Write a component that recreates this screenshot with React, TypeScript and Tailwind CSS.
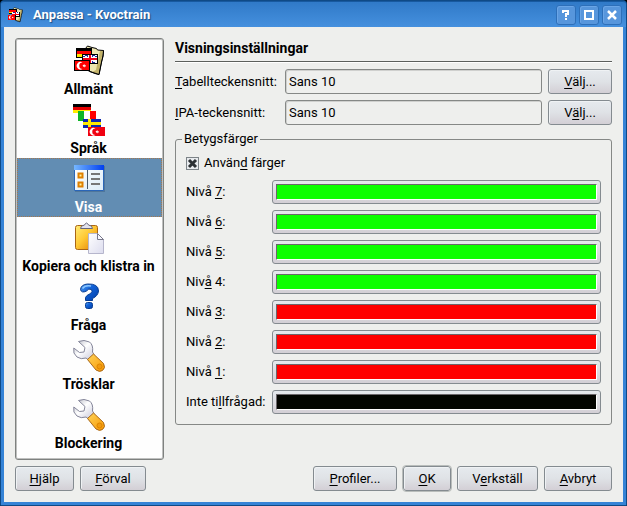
import React, { useState } from "react";

const button =
  "h-[25px] rounded-[3px] border border-[#848b90] bg-linear-to-b from-[#e6eaee] via-[#dfe2e6] to-[#d3cfd5] text-[13px] leading-4 text-black shadow-[inset_1px_1px_0_#eff2f4]";

function Crescent({ x, y }: { x: number; y: number }) {
  return (
    <g transform={`translate(${x} ${y})`} fill="#fff" shapeRendering="geometricPrecision">
      <path d="M7.500 1.500A3.800 3.800 0 1 0 7.500 8A2.800 2.800 0 1 1 7.500 1.500Z" />
      <path d="M9.500 3v1.200h1.300v1.200H9.500v1.200L7.500 4.800z" />
    </g>
  );
}

function GeneralIcon({ size = 32 }: { size?: number }) {
  return (
    <svg width={size} height={size} viewBox="0 0 32 32">
      <path d="M12.500 3.500L14.500 1L19 2.500L23.500 3.500L24.500 5L30.500 5.500L30 11L28.500 17L26 29.500L22 28.500L15.500 26V12Z" fill="#eee6b0" stroke="#000" />
      <path d="M27 6L30 6L28 17L25.500 29L19 27L23 25Z" fill="#c2b268" />
      <path d="M30.500 5.500L30 11L28.500 17L26 29.500L17 26.500" fill="none" stroke="#000" />
      <g shapeRendering="crispEdges">
        <path d="M3 3h16v10H3z" fill="#000" />
        <path d="M4 6h14v3H4z" fill="#f00" />
        <path d="M4 9h14v3H4z" fill="#ffe400" />
        <path d="M9 9h16v10H9z" fill="#000" />
        <path d="M10 10h14v8H10z" fill="#1d2ca0" />
        <path d="M10 10h2v1h2v1h-2v-1h-2zM24 10h-2v1h-2v1h2v-1h2zM22 16h2v2h-2v-1h-2v-1z" fill="#fff" />
        <path d="M15 10h4v8h-4zM10 12h14v4H10z" fill="#fff" />
        <path d="M16 10h2v8h-2zM10 13h14v2H10z" fill="#f00018" />
        <path d="M1 15h16v11H1z" fill="#000" />
        <path d="M2 16h14v9H2z" fill="#f00" />
      </g>
      <Crescent x={2} y={16} />
    </svg>
  );
}

function LanguageIcon() {
  return (
    <svg width="32" height="32" viewBox="0 0 32 32" shapeRendering="crispEdges">
      <path d="M0 0h18v3H0z" fill="#000" />
      <path d="M0 3h18v3H0z" fill="#e60000" />
      <path d="M0 6h18v3H0z" fill="#ffec00" />
      <path d="M5 7h6v10H5z" fill="#0cb527" />
      <path d="M11 7h6v10h-6z" fill="#fff" />
      <path d="M17 7h6v10h-6z" fill="#f00" />
      <path d="M10 15h18v9H10z" fill="#0a27ae" />
      <path d="M15 15h3v9h-3zM10 18h18v3H10z" fill="#ffe800" />
      <path d="M15 23h17v9H15z" fill="#f00010" />
      <Crescent x={15} y={23} />
    </svg>
  );
}

function ViewIcon() {
  return (
    <svg width="32" height="32" viewBox="0 0 32 32">
      <defs>
        <linearGradient id="view-title">
          <stop stopColor="#75b7ff" />
          <stop offset="1" stopColor="#003ff0" />
        </linearGradient>
        <linearGradient id="view-page" x2="1" y2="1">
          <stop stopColor="#fff" />
          <stop offset="1" stopColor="#dcecf8" />
        </linearGradient>
      </defs>
      <path d="M2 3h30v26H2z" fill="#42678a" opacity=".6" />
      <path d="M1.500 2.500h29v25h-29z" fill="url(#view-page)" stroke="#2a66b8" />
      <path d="M1 2h30v5H1z" fill="url(#view-title)" />
      <path d="M14.500 7v19" stroke="#49596b" />
      <path d="M5.500 10.500h4v4h-4zM5.500 19.500h4v4h-4z" fill="#fff3a0" stroke="#df8000" strokeWidth="2" />
      <path d="M18 11h9M18 16h9M18 21h9" stroke="#777" strokeWidth="2" />
    </svg>
  );
}

function PasteIcon() {
  return (
    <svg width="32" height="32" viewBox="0 0 32 32">
      <defs>
        <linearGradient id="board" x2="1" y2="1">
          <stop stopColor="#ffec78" />
          <stop offset=".45" stopColor="#ffc934" />
          <stop offset="1" stopColor="#e07900" />
        </linearGradient>
        <linearGradient id="sheet" x2="1" y2="1">
          <stop stopColor="#fff" />
          <stop offset="1" stopColor="#dcdcee" />
        </linearGradient>
      </defs>
      <rect x="2.500" y="3.500" width="22" height="24" rx="2" fill="url(#board)" stroke="#a96516" />
      <path d="M7.500 6.500q0-3 4-3.500 2-4 4 0 4 .5 4 3.500z" fill="#e2e2ed" stroke="#67677c" />
      <path d="M15.500 11.500h9l6 6v14h-15z" fill="url(#sheet)" stroke="#b6b6cc" />
      <path d="M24.500 11.500v6h6z" fill="#f8f8ff" stroke="#777789" />
    </svg>
  );
}

function QuestionIcon() {
  return (
    <svg width="32" height="32" viewBox="0 0 32 32">
      <defs>
        <linearGradient id="question" x2="1" y2="1">
          <stop stopColor="#5ba5f2" />
          <stop offset=".4" stopColor="#1262d8" />
          <stop offset="1" stopColor="#003da6" />
        </linearGradient>
      </defs>
      <g fill="url(#question)" stroke="#073c92">
        <path d="M7.500 8.500Q8 3.500 14.500 3Q25.500 2.500 25.500 10Q25 15 19.500 17.500V19.500H12.500V16.500Q13 14.500 17.500 12.500Q20 10.500 18.500 8.500Q15.500 7 13.500 10Q8.500 12.500 7.500 8.500Z" />
        <rect x="12.500" y="21.500" width="7" height="6" rx="2" />
      </g>
      <path d="M9.500 7.500Q12 4 18 5" fill="none" stroke="#8cc7ff" strokeWidth="1.500" />
    </svg>
  );
}

function WrenchIcon() {
  return (
    <svg width="32" height="32" viewBox="0 0 32 32">
      <defs>
        <linearGradient id="steel" x2="1" y2="1">
          <stop stopColor="#aeb0bd" />
          <stop offset=".45" stopColor="#fff" />
          <stop offset="1" stopColor="#c5c5d8" />
        </linearGradient>
        <linearGradient id="handle" x2="1" y2="1">
          <stop stopColor="#ffd45a" />
          <stop offset="1" stopColor="#f79600" />
        </linearGradient>
      </defs>
      <path d="M5.500 1.500L12 7.500L11 12L6.500 12.500L.8 8Q-.5 13.500 4 17Q8 19.800 13 18L15.500 20L21 14.500L19.500 12Q20.500 5 16.500 2Q11-.8 5.500 1.500Z" fill="url(#steel)" stroke="#85869a" />
      <path d="M14.500 19.500L20.500 14L30.500 23.500Q33 28 29.500 30.500Q26.500 32.500 23 30Z" fill="url(#handle)" stroke="#a9681b" />
      <circle cx="26.500" cy="26.500" r="2.500" fill="#f09a10" stroke="#df8500" />
    </svg>
  );
}

const pages: { name: string; icon: React.ReactNode }[] = [
  { name: "Allmänt", icon: <GeneralIcon /> },
  { name: "Språk", icon: <LanguageIcon /> },
  { name: "Visa", icon: <ViewIcon /> },
  { name: "Kopiera och klistra in", icon: <PasteIcon /> },
  { name: "Fråga", icon: <QuestionIcon /> },
  { name: "Trösklar", icon: <WrenchIcon /> },
  { name: "Blockering", icon: <WrenchIcon /> },
];

const levels = [
  { before: "Nivå ", key: "7", after: ":", color: "bg-[#0cff00]" },
  { before: "Nivå ", key: "6", after: ":", color: "bg-[#0cff00]" },
  { before: "Nivå ", key: "5", after: ":", color: "bg-[#0cff00]" },
  { before: "Niv", key: "å", after: " 4:", color: "bg-[#0cff00]" },
  { before: "Nivå ", key: "3", after: ":", color: "bg-[#ff0000]" },
  { before: "Nivå ", key: "2", after: ":", color: "bg-[#ff0000]" },
  { before: "Nivå ", key: "1", after: ":", color: "bg-[#ff0000]" },
  { before: "Inte ti", key: "l", after: "lfrågad:", color: "bg-[#030500]" },
];

function Key({ before = "", letter, after = "" }: { before?: string; letter: string; after?: string }) {
  return (
    <span>
      {before}
      <span className="underline underline-offset-2">{letter}</span>
      {after}
    </span>
  );
}

function TitleButton({ label, children }: { label: string; children: React.ReactNode }) {
  return (
    <button
      aria-label={label}
      className="grid size-5 place-items-center rounded-[3px] border border-[#2d6fb9] bg-[#5796dc] shadow-[inset_1px_1px_0_#6aa5e6]"
    >
      <svg width="14" height="14" viewBox="0 0 14 14" fill="none" stroke="#fff" strokeWidth="2">
        {children}
      </svg>
    </button>
  );
}

function FontRow({ id, label, choose }: { id: string; label: React.ReactNode; choose: React.ReactNode }) {
  return (
    <div className="flex items-center">
      <label htmlFor={id} className="w-[110px] shrink-0">
        {label}
      </label>
      <input
        id={id}
        readOnly
        value="Sans 10"
        className="mr-1.5 h-[25px] min-w-0 flex-1 rounded-[3px] border border-[#858886] bg-[#eeefed] px-[3px] shadow-[inset_1px_1px_0_#cfd0ce] outline-none"
      />
      <button className={`${button} w-16`}>{choose}</button>
    </div>
  );
}

export default function App() {
  const [page, setPage] = useState("Visa");
  return (
    <div className="min-h-screen bg-black font-[Roboto,'Noto_Sans',sans-serif] text-[13px] leading-4 text-black">
      <div className="flex min-h-screen flex-col rounded-t-[4px] border border-[#0f4a86] bg-[#3583d6]">
        <header className="flex h-[26px] items-center gap-[3px] rounded-t-[3px] border-t border-[#17599f] bg-linear-to-b from-[#307ac8] to-[#4590de] pr-1 pl-1.5">
          <GeneralIcon size={16} />
          <h1 className="ml-[7px] flex-1 font-bold text-white [text-shadow:1px_1px_1px_#1b4c83]">
            Anpassa - Kvoctrain
          </h1>
          <TitleButton label="Hjälp">
            <path d="M4 5V3h5v3H7v3M6 11h2" />
          </TitleButton>
          <TitleButton label="Maximera">
            <path d="M3 3h8v8H3z" />
          </TitleButton>
          <TitleButton label="Stäng">
            <path d="M3 3l8 8M11 3l-8 8" strokeWidth="2.500" />
          </TitleButton>
        </header>

        <main className="mx-[3px] mb-[3px] flex flex-1 flex-col bg-[#eeefed] px-[11px] pt-[11px] pb-[11px]">
          <div className="flex flex-1 gap-[11px]">
            <nav className="w-[149px] shrink-0 rounded-[3px] border border-[#7e817f] bg-[#fefefe] px-px pt-px pb-1.5 shadow-[inset_0_0_0_1px_#bfc0bf]">
              {pages.map((p) => (
                <button
                  key={p.name}
                  onClick={() => setPage(p.name)}
                  className={
                    p.name === page
                      ? "flex h-[59px] w-full flex-col items-center border border-dotted border-[#a5784f] bg-[#628db3] pt-1 pr-0.5 font-bold whitespace-nowrap text-white"
                      : "flex h-[59px] w-full flex-col items-center border border-transparent pt-1 pr-0.5 font-bold whitespace-nowrap"
                  }
                >
                  {p.icon}
                  <span className="mt-1 text-[14px]">{p.name}</span>
                </button>
              ))}
            </nav>

            <section className="min-w-0 flex-1">
              <h2 className="h-6 border-b border-[#5c5f5c] text-[14px] leading-5 font-bold shadow-[0_1px_0_#fff]">
                Visningsinställningar
              </h2>
              <div className="mt-[7px] flex flex-col gap-1.5">
                <FontRow
                  id="table-font"
                  label={<Key letter="T" after="abellteckensnitt:" />}
                  choose={<Key letter="V" after="älj..." />}
                />
                <FontRow
                  id="ipa-font"
                  label={<Key letter="I" after="PA-teckensnitt:" />}
                  choose={<Key before="V" letter="ä" after="lj..." />}
                />
              </div>

              <fieldset className="mt-1.5 rounded-[3px] border border-[#858886] px-2.5 pb-2.5">
                <legend className="-ml-1 px-0.5">Betygsfärger</legend>
                <label className="mt-2 flex h-4 items-center gap-[5px]">
                  <input
                    type="checkbox"
                    defaultChecked
                    className="peer size-[13px] appearance-none border border-[#7c8387] bg-[#e8ebee]"
                  />
                  <svg
                    className="pointer-events-none invisible -ml-[18px] size-[13px] peer-checked:visible"
                    viewBox="0 0 13 13"
                    stroke="#2b3033"
                    strokeWidth="3"
                  >
                    <path d="M3 3l7 7M10 3l-7 7" />
                  </svg>
                  <Key before="Använ" letter="d" after=" färger" />
                </label>
                <div className="mt-[9px] flex flex-col gap-1.5">
                  {levels.map((l, i) => (
                    <div key={i} className="flex items-center">
                      <label htmlFor={`level-${i}`} className="w-[86px] shrink-0 whitespace-nowrap">
                        <Key before={l.before} letter={l.key} after={l.after} />
                      </label>
                      <button
                        id={`level-${i}`}
                        className="h-6 flex-1 rounded-[3px] border border-[#848b90] bg-linear-to-b from-[#e6eaee] to-[#d3cfd5] p-[3px]"
                      >
                        <span
                          className={`block h-full border border-t-[#6b676b] border-r-white border-b-white border-l-[#6b676b] ${l.color}`}
                        />
                      </button>
                    </div>
                  ))}
                </div>
              </fieldset>
            </section>
          </div>

          <footer className="mt-1.5 flex gap-1.5">
            <button className={`${button} w-[59px]`}>
              <Key letter="H" after="jälp" />
            </button>
            <button className={`${button} w-[66px]`}>
              <Key letter="F" after="örval" />
            </button>
            <button className={`${button} ml-auto w-[84px]`}>
              <Key letter="P" after="rofiler..." />
            </button>
            <button className={`${button} w-12 outline outline-[#b9bdbb]`}>
              <Key letter="O" after="K" />
            </button>
            <button className={`${button} w-[81px]`}>
              <Key before="V" letter="e" after="rkställ" />
            </button>
            <button className={`${button} w-[68px]`}>
              <Key letter="A" after="vbryt" />
            </button>
          </footer>
        </main>
      </div>
    </div>
  );
}
